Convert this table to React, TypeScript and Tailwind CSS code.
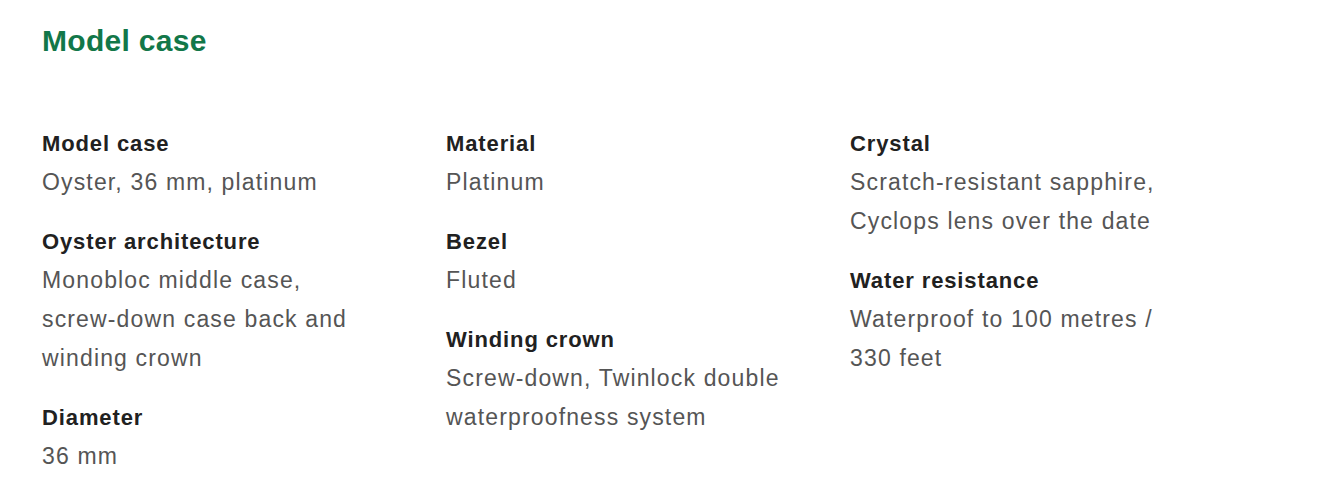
const columns = [
  [
    { label: "Model case", value: "Oyster, 36 mm, platinum" },
    { label: "Oyster architecture", value: "Monobloc middle case, screw-down case back and winding crown" },
    { label: "Diameter", value: "36 mm" },
  ],
  [
    { label: "Material", value: "Platinum" },
    { label: "Bezel", value: "Fluted" },
    { label: "Winding crown", value: "Screw-down, Twinlock double waterproofness system" },
  ],
  [
    { label: "Crystal", value: "Scratch-resistant sapphire, Cyclops lens over the date" },
    { label: "Water resistance", value: "Waterproof to 100 metres / 330 feet" },
  ],
];

// keep hyphenated words together like the original
function Words({ text }: { text: string }) {
  return (
    <>
      {text.split(" ").map((w, i) => (
        <span key={i}>
          {i > 0 && " "}
          {w.includes("-") ? <span className="whitespace-nowrap">{w}</span> : w}
        </span>
      ))}
    </>
  );
}

function Spec({ label, value }: { label: string; value: string }) {
  return (
    <div className="flex flex-col">
      <dt className="text-[22px] leading-[39px] font-bold text-[#212121] tracking-[0.04em]">{label}</dt>
      <dd className="text-[23px] leading-[39px] text-[#555555] tracking-[0.05em]">
        <Words text={value} />
      </dd>
    </div>
  );
}

export default function App() {
  return (
    <main className="w-full min-h-screen bg-white px-[42px] pt-[23px]" style={{ fontFamily: '"Liberation Sans", Arial, sans-serif' }}>
      <h2 className="text-[30px] leading-[36px] font-bold text-[#127749] tracking-[0.01em]">Model case</h2>
      <div className="grid grid-cols-[404px_404px_404px] mt-[65px]">
        {columns.map((col, i) => (
          <dl key={i} className="flex flex-col gap-[20px] w-[345px]">
            {col.map((s) => (
              <Spec key={s.label} label={s.label} value={s.value} />
            ))}
          </dl>
        ))}
      </div>
    </main>
  );
}
